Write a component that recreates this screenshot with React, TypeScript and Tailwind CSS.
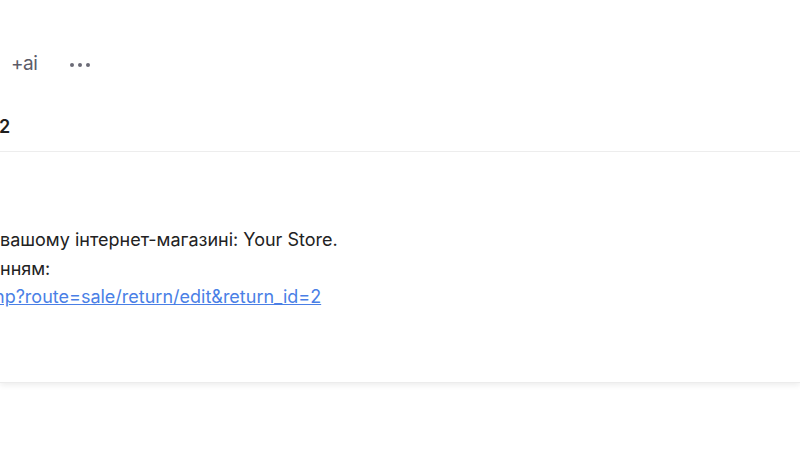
import React from 'react';

export default function App() {
  return (
    <div className="w-[800px] h-[450px] bg-white overflow-hidden text-[#222]" style={{ fontFamily: 'Inter, "Noto Sans", sans-serif' }}>
      <div className="h-[383px] shadow-[0_2px_6px_rgba(0,0,0,0.08)] border-b border-[#ececec] flex flex-col">
        {/* toolbar */}
        <div className="h-[104px] flex items-center gap-[33px] pl-[11px] pt-[24px]">
          <span className="text-[19px] text-[#5c5c68] tracking-[-0.5px]">+ai</span>
          <span className="flex gap-[4px] pt-[1px]">
            <span className="w-[4px] h-[4px] rounded-full bg-[#6b6b76]" />
            <span className="w-[4px] h-[4px] rounded-full bg-[#6b6b76]" />
            <span className="w-[4px] h-[4px] rounded-full bg-[#6b6b76]" />
          </span>
        </div>
        {/* subject */}
        <div className="h-[48px] flex items-center border-b border-[#ededed] pb-[2px]">
          <h1 className="text-[18px] font-semibold text-[#1f1f1f] -ml-[1px]">2</h1>
        </div>
        {/* body */}
        <div className="pt-[74px] text-[18px] leading-[28.5px] whitespace-nowrap">
          <p>вашому інтернет-магазині: Your Store.</p>
          <p>нням:</p>
          <p className="-ml-[6px]">
            <a href="#" className="text-[#4a7fe6] underline">hp?route=sale/return/edit&amp;return_id=2</a>
          </p>
        </div>
      </div>
    </div>
  );
}
